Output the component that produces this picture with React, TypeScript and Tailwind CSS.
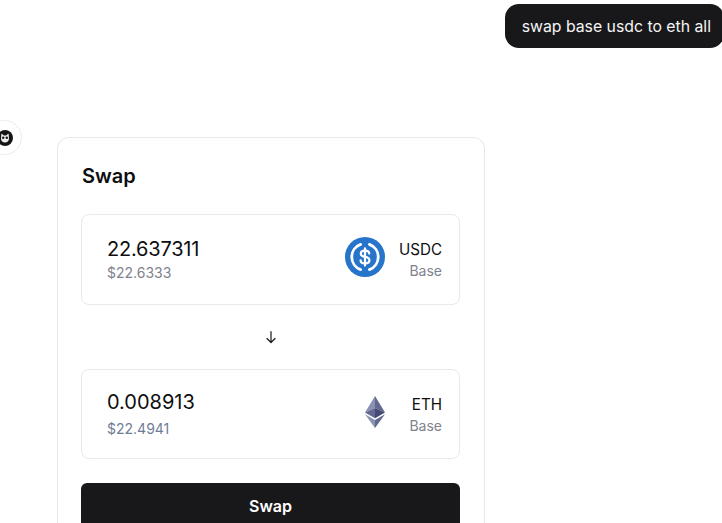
import React from "react";

function UsdcIcon() {
  return (
    <svg width="40" height="40" viewBox="0 0 40 40" className="mb-[6px] shrink-0">
      <circle cx="20" cy="20" r="20" fill="#2775CA" />
      <path d="M15.6 7.4A13.4 13.4 0 0 0 15.6 32.6" fill="none" stroke="#fff" strokeWidth="2.8" strokeLinecap="round" />
      <path d="M24.4 7.4A13.4 13.4 0 0 1 24.4 32.6" fill="none" stroke="#fff" strokeWidth="2.8" strokeLinecap="round" />
      <path d="M24.2 16.6c0-1.9-1.7-3-4.2-3s-4.2 1.2-4.2 3.1c0 2.1 1.8 2.8 4.2 3.2s4.4 1.1 4.4 3.3c0 2-1.9 3.2-4.4 3.2s-4.4-1.1-4.4-3" fill="none" stroke="#fff" strokeWidth="2.2" strokeLinecap="round" />
      <path d="M20 11.4v17.2" fill="none" stroke="#fff" strokeWidth="2.2" strokeLinecap="round" />
    </svg>
  );
}

function EthIcon() {
  return (
    <svg width="20" height="32" viewBox="0 0 20 32" className="mb-[4px] shrink-0">
      <path d="M10 0L0 16.4 10 12z" fill="#8A92B2" />
      <path d="M10 0l10 16.4L10 12z" fill="#62688F" />
      <path d="M10 12L0 16.4 10 22.2z" fill="#62688F" />
      <path d="M10 12l10 4.4L10 22.2z" fill="#454A75" />
      <path d="M0 18.3L10 32v-7.9z" fill="#8A92B2" />
      <path d="M20 18.3L10 32v-7.9z" fill="#62688F" />
    </svg>
  );
}

function TokenRow({ height, amount, amountClass, usd, usdClass, icon, symbol, iconGap, labelClass }: { height: string; amount: string; amountClass: string; usd: string; usdClass: string; icon: React.ReactNode; symbol: string; iconGap: string; labelClass: string }) {
  return (
    <div className={`flex items-center justify-between rounded-lg border border-[#e9e9e9] pl-[25px] pr-[17px] ${height}`}>
      <div className="flex flex-col pb-[2px]">
        <span className={`text-[20px] leading-[28px] text-[#0e0e10] ${amountClass}`}>{amount}</span>
        <span className={`text-[14px] leading-[20px] ${usdClass}`}>{usd}</span>
      </div>
      <div className={`flex items-center ${iconGap}`}>
        {icon}
        <div className={`flex flex-col items-end ${labelClass}`}>
          <span className="text-[15.2px] leading-[22px] text-[#0e0e10]">{symbol}</span>
          <span className="text-[14px] leading-[20px] text-[#80838d]">Base</span>
        </div>
      </div>
    </div>
  );
}

export default function App() {
  return (
    <div className="h-[523px] w-[722px] overflow-hidden bg-white font-['Inter','Liberation_Sans',sans-serif]">
      <div className="flex justify-end pt-[4px]">
        <div className="-mr-[2px] flex h-[44px] items-center rounded-[14px] bg-[#18181a] pl-[17px] pr-[13px] pt-[2px] text-[15.8px] text-[#f4f4f5]">
          swap base usdc to eth all
        </div>
      </div>
      <div className="mt-[89px] flex items-start gap-[35px]">
        <div className="-ml-[13px] mt-[-17px] flex h-[35px] w-[35px] shrink-0 items-center justify-center rounded-full border border-[#ebebeb] bg-white">
          <svg width="16" height="16" viewBox="0 0 16 16">
            <circle cx="8" cy="8" r="8" fill="#151515" />
            <path d="M4.4 3.6L7 5.6H9L11.6 3.6L12 8.4C12 10.8 10.2 12.4 8 12.4S4 10.8 4 8.4z" fill="#eeeeee" />
            <circle cx="6.2" cy="7.8" r="1.2" fill="#151515" />
            <circle cx="9.8" cy="7.8" r="1.2" fill="#151515" />
          </svg>
        </div>
        <div className="w-[428px] shrink-0 rounded-t-xl border border-b-0 border-[#e9e9e9] pb-6 pl-[23px] pr-[24px] pt-[24px]">
          <h2 className="ml-px text-[20px] font-semibold leading-[28px] text-[#0e0e10]">Swap</h2>
          <div className="mt-[24px]">
            <TokenRow height="h-[91px]" amount="22.637311" amountClass="tracking-[-0.2px]" usd="$22.6333" usdClass="text-[#80838d]" icon={<UsdcIcon />} symbol="USDC" iconGap="gap-[14px]" labelClass="" />
          </div>
          <div className="flex h-[64px] items-center justify-center">
            <svg width="16" height="16" viewBox="0 0 16 16" fill="none" stroke="#18181a" strokeWidth="1.2" strokeLinecap="round" strokeLinejoin="round">
              <path d="M8 2.5v11M4 9.5l4 4 4-4" />
            </svg>
          </div>
          <TokenRow height="h-[90px]" amount="0.008913" amountClass="" usd="$22.4941" usdClass="mt-[3px] text-[#6f7c95]" icon={<EthIcon />} symbol="ETH" iconGap="gap-[24px]" labelClass="pt-[2px]" />
          <button className="mt-[24px] flex h-[46px] w-full items-center justify-center rounded-md bg-[#18181a] text-[16px] font-semibold text-white">
            Swap
          </button>
        </div>
      </div>
    </div>
  );
}
